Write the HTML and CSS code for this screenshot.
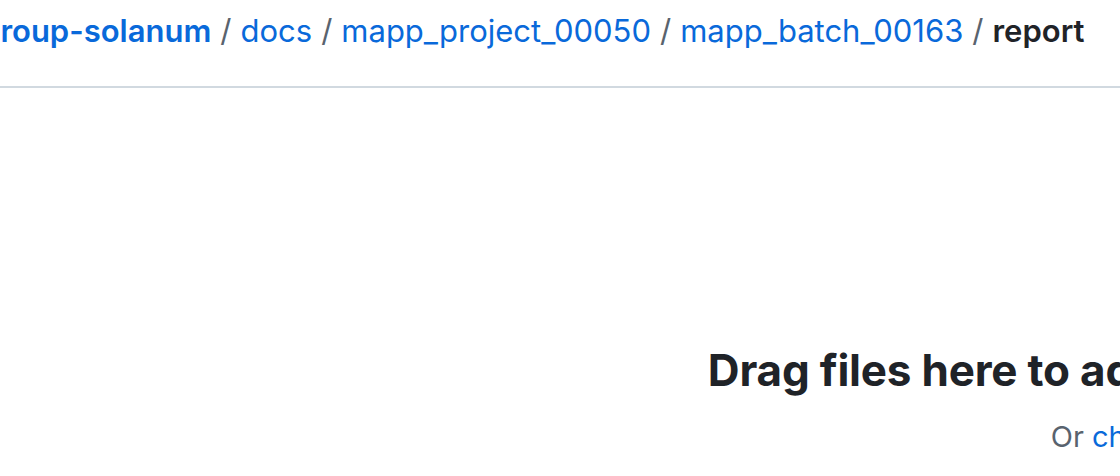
FILE: index.html
```html
<!DOCTYPE html>
<html lang="en">
<head>
<meta charset="utf-8">
<title>Upload files</title>
<link rel="stylesheet" href="styles.css">
</head>
<body>
<div class="page">
  <header class="crumbs-bar">
    <nav class="crumbs">
      <a class="crumb crumb-repo" href="#">group-solanum</a>
      <span class="sep">/</span>
      <a class="crumb" href="#">docs</a>
      <span class="sep">/</span>
      <a class="crumb" href="#">mapp_project_00050</a>
      <span class="sep">/</span>
      <a class="crumb" href="#">mapp_batch_00163</a>
      <span class="sep">/</span>
      <strong class="crumb-current">report</strong>
    </nav>
  </header>
  <main class="dropzone">
    <h2 class="drop-title">Drag files here to add them to your repository</h2>
    <p class="drop-sub">Or <a href="#">choose your files</a></p>
  </main>
</div>
</body>
</html>
```
FILE: styles.css
```css
html, body {
  margin: 0;
  padding: 0;
  background: #ffffff;
  overflow: hidden;
}
body {
  font-family: Inter, "Noto Sans", "Liberation Sans", sans-serif;
  color: #1f2328;
  width: 1120px;
  height: 476px;
}
.page {
  width: 2400px;
  margin-left: -19px;
}
.crumbs-bar {
  height: 86px;
  border-bottom: 2px solid #d1d9e0;
  box-sizing: content-box;
}
.crumbs {
  display: flex;
  align-items: baseline;
  gap: 9px;
  font-size: 31px;
  line-height: 1;
  padding-top: 15px;
  white-space: nowrap;
}
.crumb {
  color: #0969da;
  text-decoration: none;
}
.crumb-repo {
  font-weight: 600;
}
.sep {
  color: #59636e;
}
.crumb-current {
  font-weight: 600;
  color: #1f2328;
}
.dropzone {
  width: 2416px;
  text-align: center;
  padding-top: 256px;
}
.drop-title {
  margin: 0;
  font-size: 44px;
  font-weight: 700;
  line-height: 1.2;
  letter-spacing: -0.2px;
}
.drop-sub {
  margin: 23px 0 0;
  font-size: 29px;
  color: #59636e;
  line-height: 1.2;
}
.drop-sub a {
  color: #0969da;
  text-decoration: none;
}
```
